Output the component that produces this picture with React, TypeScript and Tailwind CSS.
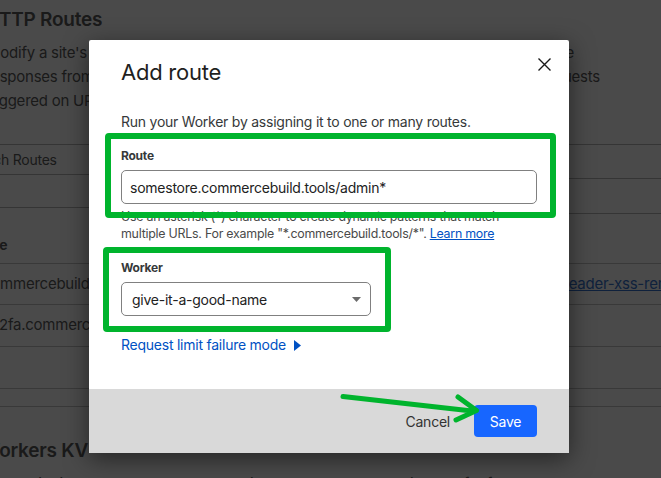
import React from "react";

const GREEN = "#00b42d";

function GreenBox({ className }: { className: string }) {
  return (
    <div
      className={`pointer-events-none absolute rounded-[4px] border-[6px] border-[#00b42d] ${className}`}
    />
  );
}

export default function App() {
  return (
    <div className="relative h-[478px] w-[661px] overflow-hidden bg-white font-['Inter',sans-serif] tracking-[-0.015em] text-[#313131]">
      {/* Background page */}
      <div className="pt-[8px]">
        <h1 className="ml-[-15px] whitespace-nowrap text-[19px] font-semibold leading-[24px]">
          HTTP Routes
        </h1>
        <div className="mt-[9px] whitespace-nowrap text-[15px] leading-[24px]">
          <div className="ml-[-13px] flex w-[587px] justify-between">
            <span>Modify a site's HTTP</span>
            <span>requests and outgoing responses at the edge</span>
          </div>
          <div className="ml-[-14px] flex w-[614px] justify-between">
            <span>responses from</span>
            <span>your Worker. Workers run on matched requests</span>
          </div>
          <div className="ml-[-15px]">triggered on URL patterns that you define below.</div>
        </div>

        <div className="mt-[31px] flex">
          <div className="w-[330px]">
            <div className="flex h-[31px] items-center whitespace-nowrap border-y border-[#a3a3a3] text-[14px]">
              <span className="ml-[-36px]">Search Routes</span>
            </div>
            <div className="h-[33px] border-b border-[#a3a3a3]" />
          </div>
          <div className="flex-1">
            <div className="h-[35px] border-y border-[#a3a3a3]" />
            <div className="h-[35px] border-b border-[#a3a3a3]" />
          </div>
        </div>

        <div className="h-[50px] border-b border-[#b5b5b5] pt-[21px] text-[14px] font-bold leading-[20px]">
          <span className="ml-[-31px]">Route</span>
        </div>
        <div className="flex h-[41px] items-center whitespace-nowrap border-b border-[#b5b5b5] text-[15px]">
          <span className="ml-[-17px] w-[577px] shrink-0">commercebuild.tools/*</span>
          <span className="text-[#0051c3] underline">header-xss-remover</span>
        </div>
        <div className="flex h-[42px] items-center whitespace-nowrap border-b border-[#b5b5b5] text-[15px]">
          <span className="ml-[-1px]">2fa.commercebuild.tools/*</span>
        </div>
        <div className="h-[42px] border-b border-[#b5b5b5]" />
        <div className="h-[18px] border-b border-[#b5b5b5]" />

        <h2 className="ml-[-19px] mt-[32px] whitespace-nowrap text-[19px] font-semibold leading-[24px]">
          Workers KV
        </h2>
        <p className="ml-[-14px] mt-[9px] whitespace-nowrap text-[15px] leading-[24px]">
          Use a distributed key-value data store in your Workers to persist data for fast reads
        </p>
      </div>

      {/* Overlay */}
      <div className="absolute inset-0 bg-[rgba(20,20,20,0.77)]" />

      {/* Modal */}
      <div className="absolute left-[89px] top-[40px] w-[480px] rounded-[2px] bg-white shadow-[0_6px_24px_rgba(0,0,0,0.5)]">
        <div className="relative px-[32px] pb-[34px] pt-[18px]">
          <button className="absolute right-[18px] top-[18px] h-[13px] w-[13px]" aria-label="Close">
            <svg viewBox="0 0 13 13" className="h-[13px] w-[13px]">
              <path d="M0.5 0.5 L12.5 12.5 M12.5 0.5 L0.5 12.5" stroke="#1a1a1a" strokeWidth="1.4" fill="none" />
            </svg>
          </button>
          <h2 className="text-[22px] font-normal leading-[28px] text-[#1f1f1f]">Add route</h2>
          <p className="mt-[26px] text-[14px] leading-[20px] text-[#36393a]">
            Run your Worker by assigning it to one or many routes.
          </p>
          <label className="mt-[16px] block text-[12px] font-bold leading-[16px] text-[#36393a]">Route</label>
          <div className="mt-[6px] flex h-[34px] w-full items-center rounded-[5px] border border-[#808080] pl-[8px] text-[14px] text-[#222]">
            somestore.commercebuild.tools/admin*
          </div>
          <p className="mt-[4px] text-[12.4px] leading-[17px] text-[#4a4a4a]">
            Use an asterisk (*) character to create dynamic patterns that match multiple URLs. For example
            "*.commercebuild.tools/*". <span className="text-[#0051c3] underline">Learn more</span>
          </p>
          <label className="mt-[18px] block text-[12px] font-bold leading-[16px] text-[#36393a]">Worker</label>
          <div className="mt-[6px] flex h-[34px] w-[250px] items-center justify-between rounded-[5px] border border-[#808080] pl-[10px] pr-[9px] text-[14px] text-[#222]">
            <span>give-it-a-good-name</span>
            <svg viewBox="0 0 9 5" className="h-[5px] w-[9px]">
              <path d="M0 0 L9 0 L4.5 5 Z" fill="#6b6b6b" />
            </svg>
          </div>
          <div className="mt-[19px] flex items-center text-[14px] leading-[20px] text-[#0051c3]">
            <span>Request limit failure mode</span>
            <svg viewBox="0 0 7 11" className="ml-[8px] h-[11px] w-[7px]">
              <path d="M0 0 L7 5.5 L0 11 Z" fill="#0051c3" />
            </svg>
          </div>

          <GreenBox className="left-[16px] top-[93px] h-[85px] w-[451px]" />
          <GreenBox className="left-[14px] top-[207px] h-[85px] w-[288px]" />
        </div>
        <div className="flex h-[64px] items-center justify-end gap-[24px] bg-[#d9d9d9] pr-[32px]">
          <button className="text-[14px] text-[#333]">Cancel</button>
          <button className="h-[32px] w-[63px] rounded-[4px] bg-[#1766ff] text-[14px] text-white">Save</button>
        </div>
      </div>

      {/* Arrow annotation */}
      <svg className="pointer-events-none absolute left-0 top-0 h-[478px] w-[661px]" viewBox="0 0 661 478">
        <path
          d="M343 396.5 L472 411 M458 397 L476.5 410.5 L456 420"
          stroke={GREEN}
          strokeWidth="5"
          strokeLinecap="round"
          strokeLinejoin="round"
          fill="none"
        />
      </svg>
    </div>
  );
}
